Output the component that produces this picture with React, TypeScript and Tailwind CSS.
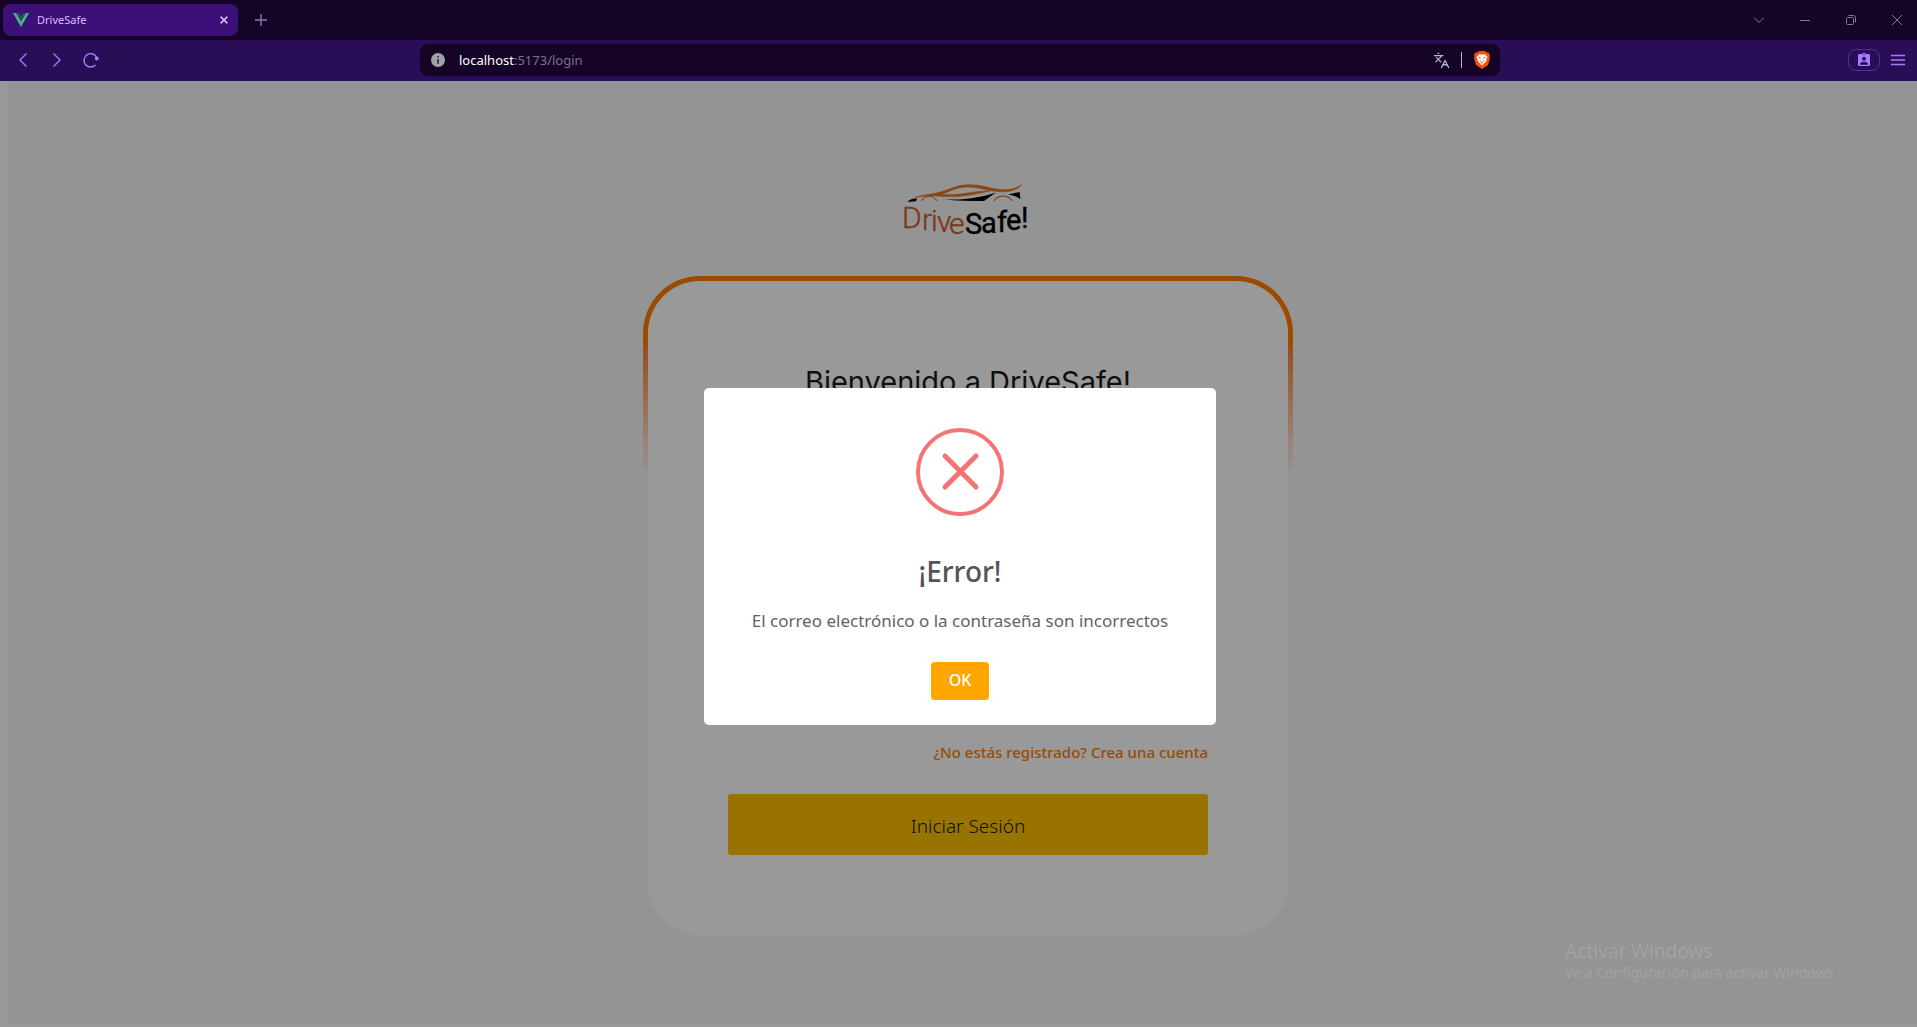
import React from "react";
import { Languages } from "lucide-react";
import { MdAssignmentInd } from "react-icons/md";

const stroke = { fill: "none", stroke: "currentColor" } as const;

function VueLogo() {
  return (
    <svg className="h-[14px] w-4 shrink-0" viewBox="0 0 16 14" aria-hidden="true">
      <path d="M0 0h3.2L8 8.3 12.8 0H16L8 14z" fill="#41b883" />
      <path d="M3.2 0h3L8 3.2 9.8 0h3L8 8.3z" fill="#35495e" />
    </svg>
  );
}

function BraveLogo() {
  return (
    <svg className="h-[18px] w-4" viewBox="0 0 16 18" aria-hidden="true">
      <path d="M5 0h6l1.4 1.5 1.8-.2L16 3.8l-.5 1.6.5 1.5-2 7.2L8 18l-6-3.900L0 6.900l.5-1.500L0 3.800l1.800-2.500 1.800.2z" fill="#fb4f0a" />
      <path
        d="M5 3.200l1.600.4h2.800L11 3.200l2.500 3-1.200 2 .3 1.300-2 2.400L8 14.500l-2.600-2.600-2-2.400.3-1.300-1.200-2z"
        fill="#fff"
      />
      <path d="M4.500 6.400l2.200.7M11.500 6.400l-2.200.7M6 9.500l1 .8M10 9.500l-1 .8M6.600 12.300L8 11.400l1.400.9" fill="none" stroke="#fb4f0a" strokeWidth="1" />
    </svg>
  );
}

function TabBar() {
  return (
    <div className="flex h-10 items-center bg-[#140428] pl-[3px]">
      <div className="flex h-8 w-[235px] items-center rounded-lg bg-[#3d1079] pl-[10px] pr-[10px]">
        <VueLogo />
        <span className="ml-2 flex-1 font-['Noto_Sans',sans-serif] text-[11px] leading-4 text-[#d6bbfb]">DriveSafe</span>
        <button type="button" aria-label="Cerrar pestaña" className="text-[#d6bbfb]">
          <svg className="h-2 w-2" viewBox="0 0 8 8" {...stroke} strokeWidth="1.500">
            <path d="M.6.6l6.800 6.800M7.400.6L.6 7.400" />
          </svg>
        </button>
      </div>
      <button type="button" aria-label="Nueva pestaña" className="ml-[17px] text-[#8d76b0]">
        <svg className="h-3 w-3" viewBox="0 0 12 12" {...stroke} strokeWidth="1.400">
          <path d="M6 0v12M0 6h12" />
        </svg>
      </button>
      <div className="ml-auto flex items-center gap-9 pr-[15px] text-[#82778f]">
        <button type="button" aria-label="Buscar pestañas">
          <svg className="h-[10px] w-[10px]" viewBox="0 0 10 10" {...stroke}>
            <path d="M0 2.500l5 5 5-5" />
          </svg>
        </button>
        <button type="button" aria-label="Minimizar">
          <svg className="h-[10px] w-[10px]" viewBox="0 0 10 10" {...stroke}>
            <path d="M0 5.500h10" />
          </svg>
        </button>
        <button type="button" aria-label="Restaurar">
          <svg className="h-[10px] w-[10px]" viewBox="0 0 10 10" {...stroke}>
            <rect x=".5" y="2.500" width="7" height="7" rx="1" />
            <path d="M2.500.5h5a2 2 0 0 1 2 2v5" />
          </svg>
        </button>
        <button type="button" aria-label="Cerrar">
          <svg className="h-[10px] w-[10px]" viewBox="0 0 10 10" {...stroke}>
            <path d="M0 0l10 10M10 0L0 10" />
          </svg>
        </button>
      </div>
    </div>
  );
}

function Toolbar() {
  return (
    <div className="flex h-[41px] items-center bg-[#2a0d57] pb-px text-[#a57bff]">
      <div className="flex flex-1 items-center pl-[15px]">
        <button type="button" aria-label="Atrás" className="ml-1">
          <svg className="h-[14px] w-2" viewBox="0 0 8 14" {...stroke} strokeWidth="1.400">
            <path d="M7.500.5L1 7l6.500 6.500" />
          </svg>
        </button>
        <button type="button" aria-label="Adelante" className="ml-[26px]">
          <svg className="h-[14px] w-2" viewBox="0 0 8 14" {...stroke} strokeWidth="1.400">
            <path d="M.5.5L7 7 .5 13.500" />
          </svg>
        </button>
        <button type="button" aria-label="Recargar" className="ml-[22px]">
          <svg className="h-4 w-4" viewBox="0 0 16 16" {...stroke} strokeWidth="1.400">
            <path d="M13.500 5A6.700 6.700 0 1 0 12.500 13" />
            <circle cx="13.800" cy="6.500" r="1.300" fill="currentColor" />
          </svg>
        </button>
      </div>
      <div className="flex h-8 w-[1080px] items-center rounded-lg bg-[#150428] pl-[11px] pr-[10px]">
        <svg className="h-[14px] w-[14px]" viewBox="0 0 14 14" aria-hidden="true">
          <circle cx="7" cy="7" r="7" fill="#a2a0a8" />
          <path d="M6.200 3h1.600v1.600H6.200zM6.200 6h1.600v4.800H6.200z" fill="#2e2040" />
        </svg>
        <p className="ml-[14px] flex-1 font-['Noto_Sans',sans-serif] text-[13px] leading-4 text-[#7b7090]">
          <span className="text-white">localhost</span>:5173/login
        </p>
        <button type="button" aria-label="Traducir" className="text-[#b9b3c1]">
          <Languages size={17} strokeWidth={1.800} />
        </button>
        <span className="ml-[11px] mr-3 h-4 w-px bg-[#b9b3c1]" />
        <button type="button" aria-label="Brave Shields">
          <BraveLogo />
        </button>
      </div>
      <div className="flex flex-1 items-center justify-end pr-3">
        <button
          type="button"
          aria-label="Perfil"
          className="flex h-[22px] w-8 items-center justify-center rounded-lg border border-[#50308a]"
        >
          <MdAssignmentInd size={16} />
        </button>
        <button type="button" aria-label="Menú" className="ml-[11px]">
          <svg className="h-3 w-[14px]" viewBox="0 0 14 12" {...stroke} strokeWidth="1.400">
            <path d="M0 1.500h14M0 6h14M0 10.500h14" />
          </svg>
        </button>
      </div>
    </div>
  );
}

function DriveSafeLogo() {
  return (
    <svg
      className="h-[60px] w-[130px]"
      viewBox="-2 0 130 60"
      role="img"
      aria-label="DriveSafe!"
      fontFamily="Roboto, 'Liberation Sans', sans-serif"
    >
      <path d="M12 14.500C24 10.500 33 11.500 45 6.500 60 .2 70 1 84 4c16 3.800 24 4.300 35-2.500C111 10.500 98 9.800 84 7 69 3.500 60 2.500 48 7.500c-4 2-7 3-10 3.500 18 2.500 32-3.500 49-3C74 10.500 62 14 46 13.500c-14-.6-22-1.300-34 1z" fill="#e47524" stroke="#e47524" strokeWidth=".6" />
      <path d="M4.500 19c3-3.200 6.500-3.800 9.500-3.300l-1 2.500zM39 16c18 1.800 35-.5 54-6.200-5 3.200-9 6.200-12 8.200-14 0-28 0-42-2zM105 11.500l11.500-2.500 1 7.200c-3.500-2.500-7-3.700-12.500-4.700z" fill="#000" />
      <path d="M18 18c4-6 12-6 16 0M91 18c4-6.500 14-6.500 18 0" fill="none" stroke="#dd7328" strokeWidth="1.200" />
      <g fill="#cb622c" fontSize="30" fontWeight="300">
        <text x="-1 19 28 34 46" y="45 47 48 49 51" stroke="#cb622c" strokeWidth=".4">Drive</text>
      </g>
      <g fill="#000" fontSize="29">
        <text x="62 78 94 103 118" y="51 50 49 47 45" stroke="#000" strokeWidth=".4">Safe!</text>
      </g>
    </svg>
  );
}

function LoginPage() {
  return (
    <main className="ml-2 flex w-screen flex-1 flex-col items-center bg-[#f7f7f7] pl-[3px] font-['Noto_Sans',sans-serif] text-[#1a1a1a]">
      <div className="mr-1 mt-[102px]">
        <DriveSafeLogo />
      </div>
      <div className="mt-[33px] w-[650px] rounded-[57px] bg-linear-to-b from-[#ff7d00] from-10% to-[#f7f7f7] to-30% p-[5px]">
        <form className="flex flex-col rounded-[52px] bg-white px-20 pb-20" onSubmit={(e) => e.preventDefault()}>
          <h1 className="mt-[80px] text-center font-['Inter',sans-serif] text-[29px] font-normal leading-[42px]">Bienvenido a DriveSafe!</h1>
          <a href="#" className="mt-[337px] self-end text-[15px] font-medium leading-6 text-[#ff7d00]">
            ¿No estás registrado? Crea una cuenta
          </a>
          <button type="submit" className="mt-[30px] h-[61px] rounded-[3px] bg-[#ffc000] pt-1 text-[19px] font-light">
            Iniciar Sesión
          </button>
        </form>
      </div>
    </main>
  );
}

function ErrorDialog() {
  return (
    <div className="absolute inset-0 flex items-center justify-center bg-black/40 pl-[3px] pt-1">
      <div
        role="alertdialog"
        aria-labelledby="dialog-title"
        aria-describedby="dialog-text"
        className="flex w-[512px] flex-col items-center rounded-[5px] bg-white px-4 pb-[25px] pt-10 font-['Noto_Sans',sans-serif] text-[#545454]"
      >
        <svg className="h-[88px] w-[88px]" viewBox="0 0 88 88" fill="none" stroke="#f27474" aria-hidden="true">
          <circle cx="44" cy="44" r="42" strokeWidth="4" />
          <path d="M29 28l31 31M60 28L29 59" strokeWidth="5" strokeLinecap="round" />
        </svg>
        <h2 id="dialog-title" className="mt-[35px] text-[28px] font-medium leading-10">
          ¡Error!
        </h2>
        <p id="dialog-text" className="mt-[18px] text-[17px] leading-6 text-[#636363]">
          El correo electrónico o la contraseña son incorrectos
        </p>
        <button type="button" className="mt-[29px] h-[38px] w-[58px] rounded-sm bg-[#ffa500] pb-0.5 text-base font-medium text-white">
          OK
        </button>
      </div>
    </div>
  );
}

export default function App() {
  return (
    <div className="flex h-screen flex-col overflow-hidden">
      <header>
        <TabBar />
        <Toolbar />
      </header>
      <div className="relative flex flex-1 flex-col overflow-hidden bg-white pb-[3px]">
        <LoginPage />
        <ErrorDialog />
        <aside className="absolute bottom-11 right-20 font-['Noto_Sans',sans-serif] text-[#a2a2a2]">
          <p className="text-[19px] leading-6">Activar Windows</p>
          <p className="text-[14px] leading-5">Ve a Configuración para activar Windows.</p>
        </aside>
      </div>
    </div>
  );
}
